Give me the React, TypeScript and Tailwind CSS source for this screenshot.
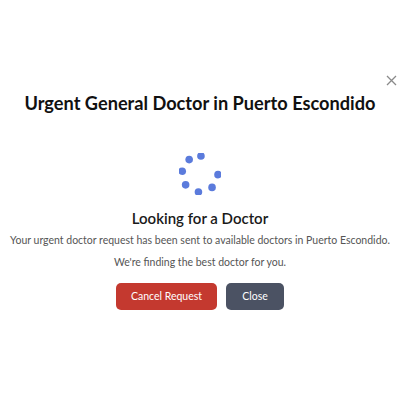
import React from "react";

function Spinner() {
  const cx = 21, cy = 21, r = 18;
  const angles = [-87, -127, 189, 143, 95, 48, 2];
  return (
    <svg width="42" height="42" viewBox="0 0 42 42">
      {angles.map((a, i) => {
        const rad = (a * Math.PI) / 180;
        return (
          <circle key={i} cx={cx + r * Math.cos(rad)} cy={cy + r * Math.sin(rad)} r="3.8" fill="#5b7bdc" />
        );
      })}
    </svg>
  );
}

export default function App() {
  return (
    <div className="relative w-[400px] h-[409px] bg-white" style={{ fontFamily: 'Lato, "Noto Sans", sans-serif' }}>
      <button className="absolute right-[3px] top-[74px] w-[12px] h-[12px] flex items-center justify-center text-gray-500">
        <svg width="11" height="11" viewBox="0 0 11 11" stroke="#8a8a8a" strokeWidth="1.3" fill="none">
          <path d="M1 1L10 10M10 1L1 10" />
        </svg>
      </button>
      <div className="flex flex-col items-center pt-[90px]">
        <h1 className="whitespace-nowrap text-[18.2px] leading-[26px] font-bold text-[#111]">Urgent General Doctor in Puerto Escondido</h1>
        <div className="mt-[37px]">
          <Spinner />
        </div>
        <h2 className="mt-[12px] whitespace-nowrap text-[15px] leading-[22px] font-semibold text-[#1a1a1a]">Looking for a Doctor</h2>
        <p className="mt-[0px] whitespace-nowrap text-[10.5px] leading-[22px] text-[#555] text-center">
          Your urgent doctor request has been sent to available doctors in Puerto Escondido.<br />
          We're finding the best doctor for you.
        </p>
        <div className="mt-[10px] flex gap-[9px]">
          <button className="w-[101px] h-[27px] rounded-[5px] bg-[#c4392f] text-white text-[10.5px]">Cancel Request</button>
          <button className="w-[58px] h-[27px] rounded-[5px] bg-[#4b5263] text-white text-[10.5px]">Close</button>
        </div>
      </div>
    </div>
  );
}
